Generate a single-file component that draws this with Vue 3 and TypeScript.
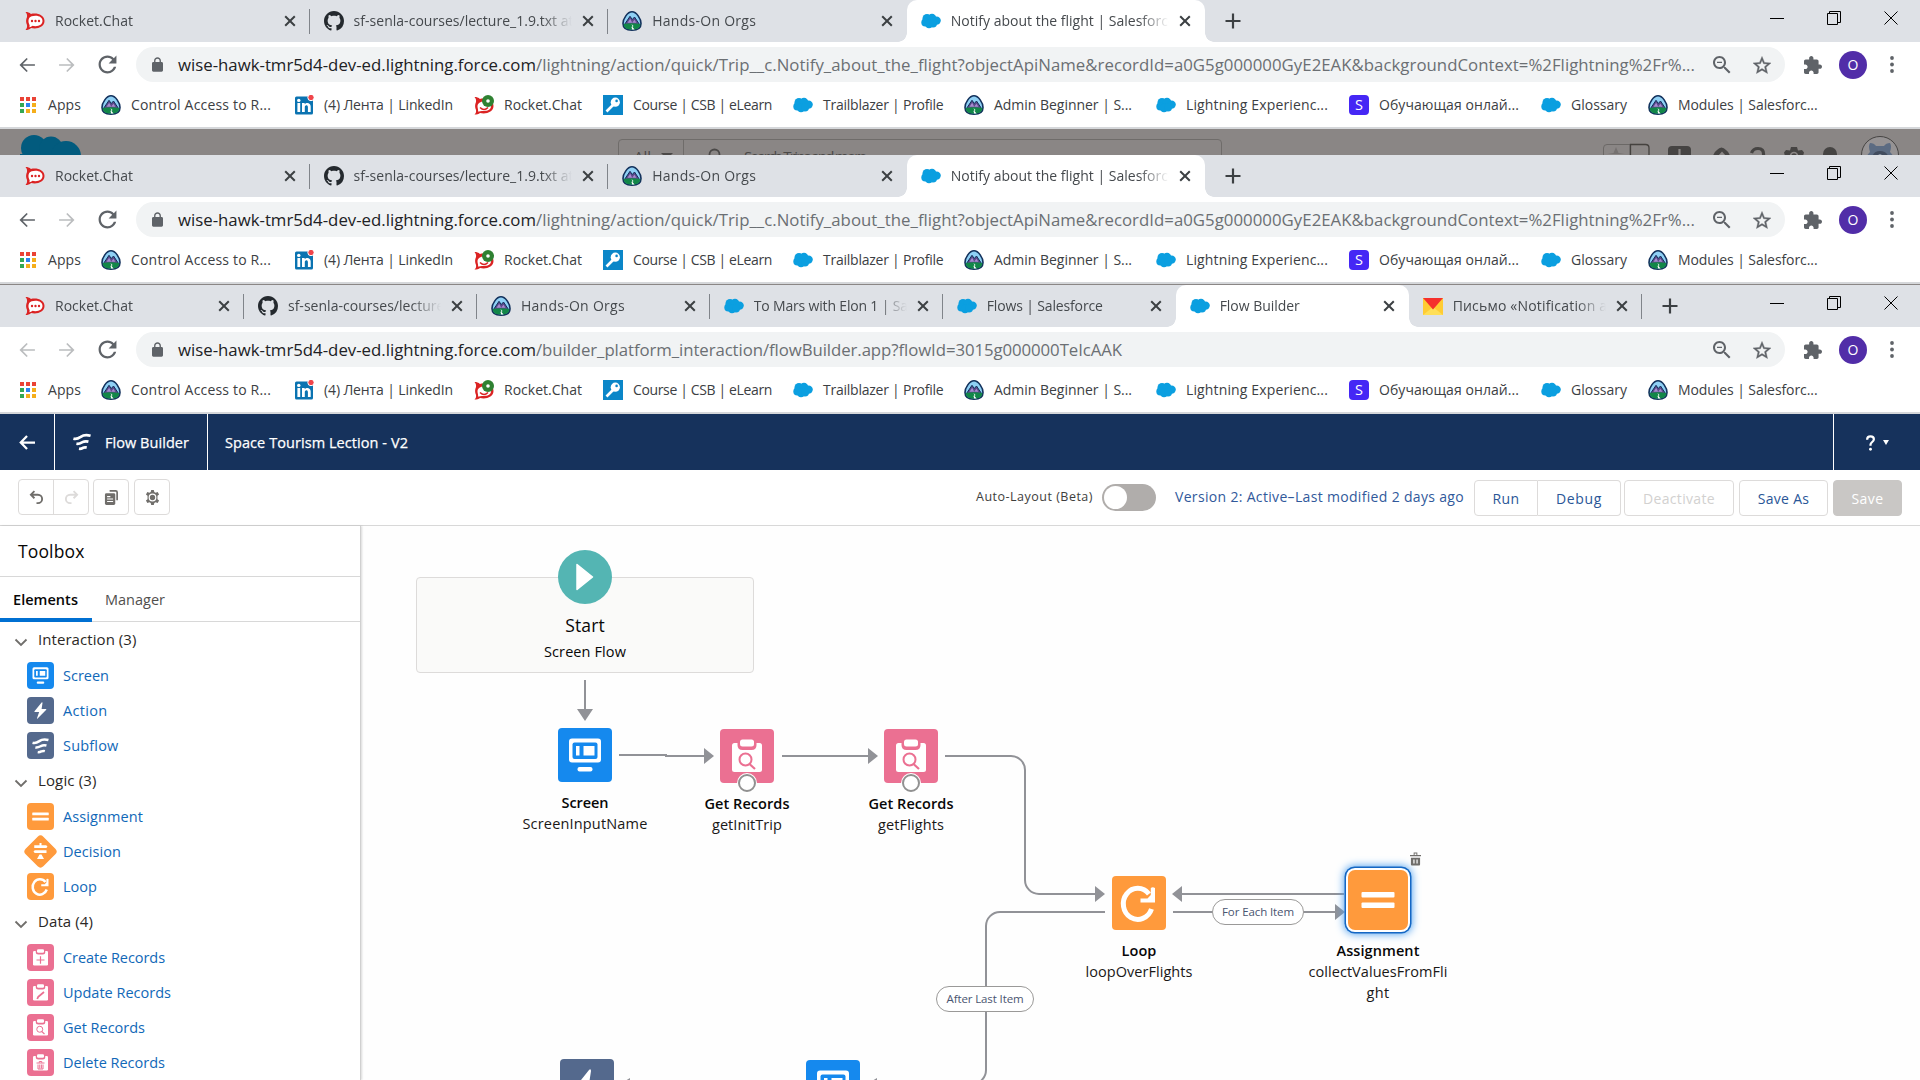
<script setup lang="ts">
interface Tab { icon: string; title: string; w: number; active?: boolean; sep?: boolean }
interface Chrome { tabs: Tab[]; pitch: number; canBack: boolean; path: string; pathW: number; band?: boolean; line?: boolean }
interface Node { x: number; y: number; icon: string; color: string; label: string; labelW: number; names: { t: string; w: number }[]; dot?: boolean; selected?: boolean }

// Spreads the letters of a one-line text so that it takes the given width.
const vFit = {
  mounted(el: HTMLElement, binding: { value: number }) {
    const n = (el.textContent || '').trim().length
    if (!n || !binding.value) return
    const w = el.getBoundingClientRect().width
    el.style.letterSpacing = `${(binding.value - w) / n}px`
  },
}

const clip = '<path fill="#fff" d="M14.500 14H39.500q2.500 0 2.500 2.500V40.500q0 2.500-2.500 2.500H14.500q-2.500 0-2.500-2.500V16.500q0-2.500 2.500-2.500z"/><path d="M17.500 12h19v4q0 5-5 5h-9q-5 0-5-5z" fill="#eb7092"/><rect x="20" y="10.500" width="14" height="7" rx="2.500" fill="#fff"/>'
const flowStrips = '<path d="M1.500 7.500C5 8.500 7 7.500 10 5.500 13.500 3 17 3 21.500 4.200M5 13.500c3 .6 4.500-.4 7-1.800 2.200-1.200 4.500-1.200 7-.6M8 19.300c2.200.4 3.200-.2 4.800-1 1.600-.7 2.800-.6 4.200-.2" fill="none" stroke="#fff" stroke-width="3.200"/>'
const reloadPath = 'M17.65 6.35C16.2 4.9 14.21 4 12 4c-4.42 0-7.99 3.58-7.99 8s3.57 8 7.99 8c3.730 0 6.840-2.550 7.730-6h-2.080c-.820 2.330-3.040 4-5.650 4-3.310 0-6-2.690-6-6s2.690-6 6-6c1.660 0 3.140.690 4.220 1.780L13 11h7V4l-2.350 2.350z'

const icons: Record<string, { vb: string; body: string }> = {
  rocket: { vb: '0 0 20 20', body: '<path d="M.5 1c2 0 4.200.6 5.400 2 6-1.600 13.600 1 13.600 7S12 18.600 6 17c-1.200 1.400-3.400 2-5.500 2 1.500-1.800 1.800-3.200 1.500-5C.8 11.600.8 8.400 2 6 2.300 4.200 2 2.800.5 1z" fill="#db2323"/><path d="M10.500 4.800c4.200 0 7 2.200 7 5.200s-2.800 5.200-7 5.200c-1.200 0-2.200-.1-3-.4-1 .8-1.800 1.200-3.200 1.400.5-1 .5-2-.1-3-1-1.800-1-4.600 0-6.300 1.200-1.400 3.300-2.100 6.300-2.100z" fill="#fff"/><g fill="#db2323"><circle cx="7" cy="10" r="1.200"/><circle cx="10.500" cy="10" r="1.200"/><circle cx="14" cy="10" r="1.200"/></g>' },
  rocketDot: { vb: '0 0 20 20', body: '<path d="M.5 2c2 0 4.200.6 5.400 2 6-1.600 13.600 1 13.600 7S12 19.600 6 18c-1.200 1.400-3.400 1.500-5.500 1.500 1.500-1.300 1.800-2.700 1.500-4.500C.8 12.600.8 9.400 2 7 2.300 5.200 2 3.800.5 2z" fill="#db2323"/><path d="M10 6.500c4.200 0 7 1.700 7 4.700s-2.800 4.700-7 4.700c-3 0-5 .3-6 .6.5-2-.5-3-.5-5 0-3.500 3-5 6.500-5z" fill="#fff"/><path d="M6 12.500q4 4 8 0" stroke="#db2323" stroke-width="1.500" fill="none"/><circle cx="14" cy="6" r="6" fill="#2f8132"/><circle cx="14" cy="6" r="1.800" fill="#fff"/>' },
  github: { vb: '0 0 16 16', body: '<path fill="#24292e" d="M8 0C3.580 0 0 3.580 0 8c0 3.540 2.290 6.530 5.470 7.590.4.070.550-.170.550-.380 0-.190-.010-.820-.010-1.490-2.010.370-2.530-.490-2.690-.940-.090-.230-.480-.940-.820-1.130-.280-.150-.680-.520-.010-.530.630-.010 1.080.580 1.230.820.720 1.210 1.870.870 2.330.660.070-.520.280-.870.510-1.070-1.780-.2-3.640-.890-3.640-3.950 0-.870.310-1.590.820-2.150-.080-.2-.360-1.020.080-2.120 0 0 .670-.210 2.200.820.640-.180 1.320-.270 2-.270.680 0 1.360.090 2 .270 1.530-1.040 2.200-.820 2.200-.820.440 1.100.160 1.920.080 2.120.510.560.820 1.270.820 2.150 0 3.070-1.870 3.750-3.650 3.950.290.250.540.730.540 1.480 0 1.070-.010 1.930-.010 2.200 0 .210.150.460.550.380A8.013 8.013 0 0016 8c0-4.420-3.580-8-8-8z"/>' },
  trail: { vb: '0 0 20 20', body: '<path d="M10 .8c4.500 0 9 7 9 11.700 0 4-2.500 6.700-9 6.700s-9-2.700-9-6.700C1 7.800 5.500.8 10 .8z" fill="#8fd0f5" stroke="#12315c" stroke-width="1.600"/><path d="M2.500 13.500L8 5.300l2.300 3.200L12.500 6l5 7.500z" fill="#5c4a8a" stroke="#12315c"/><path d="M5.500 11.800l2.700-4 2 4 2.200-3 2 3z" fill="#a78bd0"/><path d="M1.700 13q8-1.500 16.600 0c0 4-3 5.600-8.300 5.600S1.700 17 1.700 13z" fill="#128748"/><path d="M9.500 13l2 2-1 1 2 2.500h-2.300l-.7-2.500 1-.8z" fill="#fff"/>' },
  cloud: { vb: '0 0 20 20', body: '<g fill="#0b9fe0"><circle cx="6" cy="7.500" r="4.500"/><circle cx="11" cy="7" r="4.200"/><circle cx="15.600" cy="9.600" r="4.200"/><circle cx="4.300" cy="11.500" r="4"/><circle cx="8" cy="13" r="4.200"/><circle cx="12" cy="12.500" r="4"/></g>' },
  linkedin: { vb: '0 0 20 20', body: '<rect x="1" y="1.500" width="18" height="18" rx="1.500" fill="#0a73b1"/><g fill="#fff"><rect x="3.400" y="8" width="2.800" height="9"/><circle cx="4.800" cy="5.400" r="1.700"/><path d="M8 8h2.700v1.300c1.500-2.300 6-2 6 2.300V17h-2.800v-4.700c0-2.700-3.100-2.500-3.100 0V17H8z"/></g><circle cx="17" cy="2.500" r="3.200" fill="#f0454b" stroke="#fff"/>' },
  key: { vb: '0 0 20 20', body: '<path d="M0 0h20v20H0z" fill="#0b86c8"/><circle cx="12.300" cy="7.200" r="4.600" fill="#fff"/><circle cx="13.600" cy="5.900" r="1.300" fill="#0b86c8"/><path d="M10.500 9.500l-7 7" stroke="#fff" stroke-width="2.600"/>' },
  s: { vb: '0 0 20 20', body: '<rect width="20" height="20" rx="4" fill="#4527f5"/><text x="10" y="15.300" font-size="14.500" font-family="Open Sans, sans-serif" fill="#fff" text-anchor="middle">S</text>' },
  apps: { vb: '0 0 20 20', body: '<g><path d="M2 2h4v4H2zM8 2h4v4H8zM14 2h4v4h-4z" fill="#ea4335"/><path d="M2 8h4v4H2zM2 14h4v4H2z" fill="#34a853"/><path d="M8 8h4v4H8z" fill="#2b83f0"/><path d="M14 8h4v4h-4zM14 14h4v4h-4zM8 14h4v4H8z" fill="#f5ae1b"/></g>' },
  mail: { vb: '0 0 20 20', body: '<path d="M0 2h20v17H0z" fill="#ffcc33"/><path d="M0 19l10-8 10 8z" fill="#ffdf57"/><path d="M0 2h20L10 13.500z" fill="#f5302d"/>' },
  back: { vb: '0 0 24 24', body: '<path fill="currentColor" d="M21.500 11H6.830l6.090-6.090L11.500 3.500l-8.500 8.500 8.500 8.500 1.410-1.410L6.830 13H21.500v-2z"/>' },
  fwd: { vb: '0 0 24 24', body: '<path fill="currentColor" d="M2.500 11h14.670l-6.090-6.090L12.500 3.500l8.500 8.500-8.500 8.500-1.410-1.410L17.170 13H2.500v-2z"/>' },
  reload: { vb: '3.500 3.500 17 17', body: `<path fill="#5f6368" d="${reloadPath}"/>` },
  lock: { vb: '4 1 16 21', body: '<path fill="#5f6368" d="M18 8h-1V6c0-2.760-2.240-5-5-5S7 3.240 7 6v2H6c-1.100 0-2 .9-2 2v10c0 1.100.9 2 2 2h12c1.100 0 2-.9 2-2V10c0-1.100-.9-2-2-2zM9 6c0-1.660 1.340-3 3-3s3 1.340 3 3v2H9V6z"/>' },
  zoom: { vb: '3 3 18 18', body: '<path fill="#5f6368" d="M15.500 14h-.790l-.280-.270C15.410 12.590 16 11.110 16 9.500 16 5.910 13.090 3 9.500 3S3 5.910 3 9.500 5.910 16 9.500 16c1.610 0 3.090-.590 4.230-1.570l.270.280v.790l5 4.990L20.490 19l-4.990-5zm-6 0C7.010 14 5 11.990 5 9.500S7.010 5 9.500 5 14 7.010 14 9.500 11.990 14 9.500 14zM7 8.800h5v1.300H7z"/>' },
  star: { vb: '2 1.500 20 20', body: '<path fill="#5f6368" stroke="#5f6368" stroke-width=".4" d="M22 9.240l-7.190-.620L12 2 9.190 8.630 2 9.240l5.460 4.730L5.820 21 12 17.270 18.180 21l-1.630-7.030L22 9.240zM12 15.400l-3.760 2.270 1-4.280-3.320-2.880 4.380-.380L12 6.100l1.710 4.040 4.380.380-3.320 2.880 1 4.280L12 15.400z"/>' },
  puzzle: { vb: '2 1 21 21', body: '<path fill="#5f6368" d="M20.500 11H19V7c0-1.100-.9-2-2-2h-4V3.500C13 2.120 11.880 1 10.500 1S8 2.120 8 3.500V5H4c-1.100 0-1.990.9-1.990 2v3.800H3.500c1.490 0 2.700 1.210 2.700 2.700s-1.210 2.700-2.700 2.700H2V20c0 1.100.9 2 2 2h3.800v-1.500c0-1.490 1.210-2.700 2.700-2.700 1.490 0 2.700 1.210 2.700 2.700V22H17c1.100 0 2-.9 2-2v-4h1.500c1.380 0 2.500-1.120 2.500-2.500S21.880 11 20.500 11z"/>' },
  more: { vb: '0 0 4 18', body: '<g fill="#5f6368"><circle cx="2" cy="2.500" r="1.900"/><circle cx="2" cy="9" r="1.900"/><circle cx="2" cy="15.500" r="1.900"/></g>' },
  flow: { vb: '1 1 21 21', body: flowStrips },
  screen: { vb: '0 0 54 54', body: '<rect x="11" y="10.500" width="32" height="24" rx="3" fill="#fff"/><rect x="14.500" y="14.500" width="25" height="16.500" rx="2" fill="#1589ee"/><path d="M18 18h3.500v9.500H18zM25.500 18h11v9.500h-11z" fill="#fff"/><rect x="19.500" y="39" width="15" height="4.500" rx="2" fill="#fff"/>' },
  action: { vb: '0 0 54 54', body: '<path fill="#fff" d="M29.200 10.800L15 28.500q-1 1.500.8 1.500h8.500l-4.300 12.500q-.2 1.800 1.200.5L38.500 25.500q1-1.700-.8-1.700h-8.500L31 12Q31 9.500 29.200 10.800z"/>' },
  subflow: { vb: '-5.500 -6 34 34', body: flowStrips },
  assign: { vb: '0 0 54 54', body: '<rect x="10.500" y="19" width="33" height="5.500" rx="1" fill="#fff"/><rect x="10.500" y="29.500" width="33" height="5.500" rx="1" fill="#fff"/>' },
  decision: { vb: '0 0 54 54', body: '<path fill="#fff" d="M25 10h4v4.500h9.500L41 17.300 38.500 20H14.500v-5.500H25zM39 24.500V30H15.500L13 27.200l2.500-2.700zM25 33h4l5 9H20z"/>' },
  loop: { vb: '0 0 54 54', body: '<path d="M37 18A14.500 15.500 0 1 0 39.500 33" fill="none" stroke="#fff" stroke-width="5"/><path d="M43 12v14.500H28.500v-4h7L38.800 19v-7q2-1.500 4.200 0z" fill="#fff"/>' },
  get: { vb: '0 0 54 54', body: clip + '<circle cx="25.500" cy="30.500" r="6" fill="none" stroke="#eb7092" stroke-width="2"/><path d="M29.500 35l5.500 5" stroke="#eb7092" stroke-width="2.200"/>' },
  create: { vb: '0 0 54 54', body: clip + '<path d="M27 24.500v15M19 32h16" stroke="#eb7092" stroke-width="2.400"/>' },
  update: { vb: '0 0 54 54', body: clip + '<path d="M20.500 40l2-4.500L34 26" fill="none" stroke="#eb7092" stroke-width="3.600"/>' },
  del: { vb: '0 0 54 54', body: clip + '<path d="M19 28h16M24.500 27.500v-2.500h5v2.500M22 31v9h10V31M25.500 31v8M28.800 31v8" fill="none" stroke="#eb7092" stroke-width="2"/>' },
  undo: { vb: '0 0 16 16', body: '<path d="M5.800 1.200L2 5l3.800 3.800M2.200 5h7.300a4.400 4.400 0 0 1 0 9H8" fill="none" stroke="currentColor" stroke-width="2"/>' },
  copy: { vb: '0 0 16 16', body: '<path d="M6 1h6.500Q14 1 14 2.500V11" fill="none" stroke="#706e6b" stroke-width="1.800"/><rect x="1" y="3.500" width="11" height="12.500" rx="1.500" fill="#706e6b"/><path d="M3.300 7h3.500M3.300 9.600h6.400M3.300 12.300h6.400" stroke="#fff" stroke-width="1.200"/>' },
  gear: { vb: '0 0 16 16', body: '<path d="M6.600 0h2.800l.5 2.200 1.400.8 2.200-.8 1.500 2.500-1.700 1.500v3.600l1.700 1.500-1.500 2.500-2.200-.8-1.400.8-.5 2.200H6.600l-.5-2.200-1.400-.8-2.200.8L1 11.300l1.700-1.500V6.200L1 4.700l1.500-2.500 2.200.8 1.400-.8z" fill="#706e6b"/><circle cx="8" cy="8" r="3.500" fill="none" stroke="#fff" stroke-width="1.300"/>' },
  trash: { vb: '0 0 12 14', body: '<path d="M0 2.500h12v1.500H0zM4 0h4v2.500H7V1H5v1.500H4zM1 5.500h10V13q0 1-1 1H2q-1 0-1-1z" fill="#706e6b"/><path d="M4.300 7.500v4.500M7.700 7.500v4.500" stroke="#fff" stroke-width="1.300"/>' },
  question: { vb: '0 0 10 18', body: '<path d="M1.200 5.300Q1.200 1.500 5 1.500t3.800 3.300c0 3-3.800 3.200-3.800 6.200v1" fill="none" stroke="#fff" stroke-width="2.500"/><circle cx="5" cy="16" r="1.600" fill="#fff"/>' },
}

const shortTabs: Tab[] = [
  { icon: 'rocket', title: 'Rocket.Chat', w: 78, sep: true },
  { icon: 'github', title: 'sf-senla-courses/lecture_1.9.txt at', w: 220, sep: true },
  { icon: 'trail', title: 'Hands-On Orgs', w: 104 },
  { icon: 'cloud', title: 'Notify about the flight | Salesforce', w: 225, active: true },
]
const longPath = '/lightning/action/quick/Trip__c.Notify_about_the_flight?objectApiName&recordId=a0G5g000000GyE2EAK&backgroundContext=%2Flightning%2Fr%...'
const chromes: Chrome[] = [
  { tabs: shortTabs, pitch: 298.6, canBack: true, path: longPath, pathW: 1159, band: true },
  { tabs: shortTabs, pitch: 298.6, canBack: true, path: longPath, pathW: 1159, line: true },
  {
    tabs: [
      { icon: 'rocket', title: 'Rocket.Chat', w: 78, sep: true },
      { icon: 'github', title: 'sf-senla-courses/lecture_1.9.txt at', w: 220, sep: true },
      { icon: 'trail', title: 'Hands-On Orgs', w: 104, sep: true },
      { icon: 'cloud', title: 'To Mars with Elon 1 | Salesforce', w: 204, sep: true },
      { icon: 'cloud', title: 'Flows | Salesforce', w: 116 },
      { icon: 'cloud', title: 'Flow Builder', w: 80, active: true },
      { icon: 'mail', title: 'Письмо «Notification about', w: 186, sep: true },
    ],
    pitch: 232.95, canBack: false, path: '/builder_platform_interaction/flowBuilder.app?flowId=3015g000000TeIcAAK', pathW: 586,
  },
]
const bookmarks = [
  { icon: 'apps', t: 'Apps', w: 33, box: 83 },
  { icon: 'trail', t: 'Control Access to R...', w: 140, box: 193 },
  { icon: 'linkedin', t: '(4) Лента | LinkedIn', w: 129, box: 180 },
  { icon: 'rocketDot', t: 'Rocket.Chat', w: 78, box: 129 },
  { icon: 'key', t: 'Course | CSB | eLearn', w: 139, box: 190 },
  { icon: 'cloud', t: 'Trailblazer | Profile', w: 120.5, box: 171 },
  { icon: 'trail', t: 'Admin Beginner | S...', w: 138, box: 192 },
  { icon: 'cloud', t: 'Lightning Experienc...', w: 142, box: 193 },
  { icon: 's', t: 'Обучающая онлай...', w: 140, box: 192 },
  { icon: 'cloud', t: 'Glossary', w: 56, box: 107 },
  { icon: 'trail', t: 'Modules | Salesforc...', w: 139.5, box: 170 },
]
const sections = [
  { t: 'Interaction (3)', w: 98.5, items: [
    { icon: 'screen', c: 'blue', t: 'Screen', w: 46 },
    { icon: 'action', c: 'slate', t: 'Action', w: 44.5 },
    { icon: 'subflow', c: 'slate', t: 'Subflow', w: 55.5 }] },
  { t: 'Logic (3)', w: 58.5, items: [
    { icon: 'assign', c: 'orange', t: 'Assignment', w: 80 },
    { icon: 'decision', c: 'diamond', t: 'Decision', w: 58 },
    { icon: 'loop', c: 'orange', t: 'Loop', w: 34 }] },
  { t: 'Data (4)', w: 55, items: [
    { icon: 'create', c: 'pink', t: 'Create Records', w: 102 },
    { icon: 'update', c: 'pink', t: 'Update Records', w: 108 },
    { icon: 'get', c: 'pink', t: 'Get Records', w: 82 },
    { icon: 'del', c: 'pink', t: 'Delete Records', w: 102 }] },
]

// Canvas coordinates are window coordinates; the canvas starts at this origin.
const ox = 361
const oy = 526
const nodes: Node[] = [
  { x: 585, y: 728, icon: 'screen', color: 'blue', label: 'Screen', labelW: 47, names: [{ t: 'ScreenInputName', w: 125 }] },
  { x: 747, y: 729, icon: 'get', color: 'pink', label: 'Get Records', labelW: 85, names: [{ t: 'getInitTrip', w: 70 }], dot: true },
  { x: 911, y: 729, icon: 'get', color: 'pink', label: 'Get Records', labelW: 85, names: [{ t: 'getFlights', w: 66 }], dot: true },
  { x: 1139, y: 876, icon: 'loop', color: 'orange', label: 'Loop', labelW: 35, names: [{ t: 'loopOverFlights', w: 107 }] },
  { x: 1378, y: 876, icon: 'assign', color: 'orange', label: 'Assignment', labelW: 83, names: [{ t: 'collectValuesFromFli', w: 139 }, { t: 'ght', w: 23 }], selected: true },
  { x: 587, y: 1059, icon: 'action', color: 'slate', label: '', labelW: 0, names: [] },
  { x: 833, y: 1060, icon: 'screen', color: 'blue', label: '', labelW: 0, names: [] },
]
const pills = [
  { x: 1212, y: 899, width: 92, t: 'For Each Item', w: 72 },
  { x: 936, y: 986, width: 98, t: 'After Last Item', w: 77 },
]
const px = (n: number) => `${n}px`
</script>

<template>
  <div class="page">
    <section v-for="(c, ci) in chromes" :key="ci" class="chrome">
      <div class="tabs">
        <div v-for="(t, ti) in c.tabs" :key="ti" class="tab" :class="{ active: t.active, sep: t.sep }" :style="{ width: px(c.pitch) }">
          <svg class="fav" :viewBox="icons[t.icon].vb" v-html="icons[t.icon].body" />
          <span class="title"><span v-fit="t.w" class="one">{{ t.title }}</span></span>
          <svg class="x" viewBox="0 0 12 12"><path d="M1.200 1.200l9.600 9.600M10.800 1.200L1.200 10.800" stroke="#3c4043" stroke-width="2" /></svg>
        </div>
        <svg class="plus" viewBox="0 0 16 16"><path d="M8 .5v15M.5 8h15" stroke="#3c4043" stroke-width="2.200" /></svg>
        <div class="wincontrols">
          <svg width="14" height="14"><path d="M0 7.500h14" stroke="#000" /></svg>
          <svg width="14" height="14" fill="none" stroke="#000"><path d="M.5 2.500h10v11H.5zM2.500 2.500v-2h11v11h-3" /></svg>
          <svg width="14" height="14"><path d="M.5 .5l13 13M13.500 .5l-13 13" stroke="#000" /></svg>
        </div>
      </div>
      <div class="nav">
        <svg class="navicon" :class="{ dim: !c.canBack }" :viewBox="icons.back.vb" v-html="icons.back.body" />
        <svg class="navicon dim" :viewBox="icons.fwd.vb" v-html="icons.fwd.body" />
        <svg class="reload" :viewBox="icons.reload.vb" v-html="icons.reload.body" />
        <div class="urlbar">
          <svg class="lock" :viewBox="icons.lock.vb" v-html="icons.lock.body" />
          <span v-fit="358" class="host">wise-hawk-tmr5d4-dev-ed.lightning.force.com</span>
          <span v-fit="c.pathW" class="path">{{ c.path }}</span>
          <svg class="zoom" :viewBox="icons.zoom.vb" v-html="icons.zoom.body" />
          <svg class="bstar" :viewBox="icons.star.vb" v-html="icons.star.body" />
        </div>
        <svg class="puzzle" :viewBox="icons.puzzle.vb" v-html="icons.puzzle.body" />
        <span class="avatar">O</span>
        <svg class="more" :viewBox="icons.more.vb" v-html="icons.more.body" />
      </div>
      <div class="bookmarks">
        <div v-for="b in bookmarks" :key="b.t" class="bm" :style="{ width: px(b.box) }">
          <svg class="fav" :viewBox="icons[b.icon].vb" v-html="icons[b.icon].body" />
          <span v-fit="b.w" class="one">{{ b.t }}</span>
        </div>
      </div>
      <div v-if="c.band" class="band">
        <svg class="bandcloud" viewBox="0 0 62 22" fill="#025b7e"><circle cx="14" cy="14" r="13" /><circle cx="31" cy="14" r="11.500" /><circle cx="46" cy="22" r="15" /><path d="M0 20h60v2H0z" /></svg>
        <div class="bandsearch">
          <div class="bandall"><span>All</span><i class="bandcaret" /></div>
          <svg width="13" height="18"><circle cx="6.500" cy="7.500" r="5" fill="none" stroke="#4b4948" stroke-width="1.800" /></svg>
          <span v-fit="128" class="bandtext">Search Trips and more...</span>
        </div>
        <svg class="bandicons" width="304" height="26" viewBox="1602 129 304 26">
          <path d="M1630 144.500h-23q-3.500 0-3.500 3.500v10h26.500z" fill="none" stroke="#6b6866" />
          <path d="M1616 147l2.500 6 6 1h-17l6-1z" fill="#757170" />
          <path d="M1630.500 158v-13.500h15q3.500 0 3.500 3.500v10" fill="none" stroke="#45423f" stroke-width="1.300" />
          <rect x="1668" y="146" width="23" height="18" rx="4" fill="#464443" /><path d="M1679.500 149v8" stroke="#8a8685" stroke-width="2.200" />
          <path d="M1713 156q1-4 4-6 4.500-5 9 0 3 2 4 6z" fill="#464443" /><path d="M1718 156l4-4.500 4 4.500z" fill="#8a8685" />
          <path d="M1751.500 153q1.500-4.500 6.500-4.500 6 0 5.500 6.500" fill="none" stroke="#464443" stroke-width="3.200" />
          <path d="M1785 156l-1-3.500 2-2.500 4 .5 1-3.500h6l1 3.500 4-.5 2 2.500-1 3.500z" fill="#464443" /><circle cx="1794" cy="156" r="3.500" fill="none" stroke="#8a8685" stroke-width="1.600" />
          <circle cx="1830" cy="154" r="7" fill="#464443" />
          <circle cx="1880" cy="155" r="18.500" fill="#969394" stroke="#464443" />
          <path d="M1866 158q1-3 4-6-2-6 0-9 4 0 6 3h8q2-3 6-3 2 3 0 9 3 3 4 6z" fill="#5b6b82" /><path d="M1872 158q1-7 8-7t9 7z" fill="#414c5e" /><path d="M1876 156l4-2 4 2v3h-8z" fill="#98a2b0" />
        </svg>
      </div>
      <div v-if="c.line" class="hairline" />
    </section>

    <header class="apphead">
      <div class="hback"><svg viewBox="0 0 18 16"><path d="M8.500 1L1.800 8l6.700 7M2 8h15" fill="none" stroke="#fff" stroke-width="2.400" /></svg></div>
      <div class="hbuilder"><svg class="hflow" :viewBox="icons.flow.vb" v-html="icons.flow.body" /><span v-fit="84">Flow Builder</span></div>
      <div class="hname"><span v-fit="183">Space Tourism Lection - V2</span></div>
      <div class="hhelp"><svg class="q" :viewBox="icons.question.vb" v-html="icons.question.body" /><i class="caret" /></div>
    </header>

    <div class="toolbar">
      <div class="group"><span class="ib"><svg :viewBox="icons.undo.vb" v-html="icons.undo.body" /></span><span class="ib off"><svg class="flip" :viewBox="icons.undo.vb" v-html="icons.undo.body" /></span></div>
      <div class="group g2"><span class="ib"><svg :viewBox="icons.copy.vb" v-html="icons.copy.body" /></span></div>
      <div class="group g3"><span class="ib"><svg :viewBox="icons.gear.vb" v-html="icons.gear.body" /></span></div>
      <div class="right">
        <span v-fit="117" class="auto">Auto-Layout (Beta)</span>
        <span class="toggle" />
        <span v-fit="289" class="version">Version 2: Active–Last modified 2 days ago</span>
        <div class="bgroup"><button class="run"><span v-fit="27">Run</span></button><button class="debug"><span v-fit="46">Debug</span></button></div>
        <button class="deact"><span v-fit="72">Deactivate</span></button>
        <button class="saveas"><span v-fit="51.500">Save As</span></button>
        <button class="save"><span v-fit="32">Save</span></button>
      </div>
    </div>

    <div class="main">
      <aside class="side">
        <div class="sidehead"><span v-fit="66.500">Toolbox</span></div>
        <div class="sidetabs"><span class="st on"><b v-fit="65">Elements</b></span><span class="st"><span v-fit="60">Manager</span></span></div>
        <div v-for="s in sections" :key="s.t">
          <div class="shead">
            <svg width="14" height="9" viewBox="0 0 14 9"><path d="M1.500 1.500L7 7l5.500-5.500" fill="none" stroke="#706e6b" stroke-width="1.800" /></svg>
            <span v-fit="s.w">{{ s.t }}</span>
          </div>
          <div v-for="i in s.items" :key="i.t" class="sitem">
            <span class="tile" :class="i.c"><svg :viewBox="icons[i.icon].vb" v-html="icons[i.icon].body" /></span>
            <a v-fit="i.w">{{ i.t }}</a>
          </div>
        </div>
      </aside>

      <div class="canvas">
        <svg class="wires" width="1559" height="554" viewBox="361 526 1559 554">
          <g fill="none" stroke="#919297" stroke-width="2">
            <path d="M585 680v31M619 755h47v1h40M782 756h88M945 756h66a14 14 0 0 1 14 14v110a14 14 0 0 0 14 14h58M1105 912h-105a14 14 0 0 0-14 14v144a14 14 0 0 1-14 14M1344 894h-164M1173 912h164" />
          </g>
          <path fill="#919297" d="M577 709h16l-8 12zM704 748v16l10-8zM868 748v16l10-8zM1095 886v16l10-8zM1182 886v16l-10-8zM1335 904v16l10-8zM630 1078v6l-5-3zM877 1078v6l-5-3z" />
        </svg>
        <div class="start">
          <span class="play"><svg width="18" height="28" viewBox="0 0 18 28"><path d="M1 1.500v25L16.500 14z" fill="#fff" stroke="#fff" stroke-width="1.500" stroke-linejoin="round" /></svg></span>
          <span v-fit="39.500" class="startlabel">Start</span>
          <span v-fit="82" class="startkind">Screen Flow</span>
        </div>
        <div v-for="(n, ni) in nodes" :key="ni" class="node" :style="{ left: px(n.x - ox - 80), top: px(n.y - oy) }">
          <span class="big" :class="[n.color, { selected: n.selected }]">
            <svg :viewBox="icons[n.icon].vb" v-html="icons[n.icon].body" />
            <i v-if="n.dot" class="dot" />
            <svg v-if="n.selected" class="bin" :viewBox="icons.trash.vb" v-html="icons.trash.body" />
          </span>
          <b v-if="n.label" v-fit="n.labelW">{{ n.label }}</b>
          <span v-for="m in n.names" :key="m.t" v-fit="m.w" class="nm">{{ m.t }}</span>
        </div>
        <span v-for="p in pills" :key="p.t" class="pill" :style="{ left: px(p.x - ox), top: px(p.y - oy), width: px(p.width) }"><span v-fit="p.w">{{ p.t }}</span></span>
      </div>
    </div>
  </div>
</template>

<style>
html, body { margin: 0; overflow: hidden; background: #fff; }
</style>

<style scoped>
.page { width: 1920px; height: 1080px; overflow: hidden; display: flex; flex-direction: column; font-family: "Open Sans", "Noto Sans", sans-serif; font-size: 14px; color: #080707; background: #fff; }
.page * { box-sizing: border-box; }
.page span, .page a, .page b { white-space: nowrap; }
svg { display: block; flex: none; }
.chrome { flex: none; }
.tabs { height: 42px; background: #dee1e6; display: flex; align-items: center; padding-left: 11px; }
.tab { height: 42px; flex: none; display: flex; align-items: center; position: relative; padding: 0 13px 0 14px; }
.tab.sep::after { content: ""; position: absolute; right: 0; top: 9px; width: 1px; height: 25px; background: #80848a; }
.tab.active { background: #fff; border-radius: 10px 10px 0 0; }
.tab.active::before, .tab.active::after { content: ""; position: absolute; bottom: 0; width: 9px; height: 9px; }
.tab.active::before { left: -9px; background: radial-gradient(circle at 0 0, transparent 8.500px, #fff 9px); }
.tab.active::after { right: -9px; background: radial-gradient(circle at 100% 0, transparent 8.500px, #fff 9px); }
.fav { width: 20px; height: 20px; margin-right: 10px; }
.title { flex: 1; min-width: 0; overflow: hidden; color: #45494d; line-height: 24px; margin-right: 10px; -webkit-mask-image: linear-gradient(90deg, #000 calc(100% - 30px), transparent); mask-image: linear-gradient(90deg, #000 calc(100% - 30px), transparent); }
.one { display: inline-block; flex: none; }
.x { width: 12px; height: 12px; margin-right: 1px; }
.plus { width: 16px; height: 16px; margin-left: 20px; }
.wincontrols { margin-left: auto; display: flex; gap: 43px; padding: 0 22px 6px 0; }
.nav { height: 45px; display: flex; align-items: center; }
.navicon { width: 20px; height: 20px; margin-left: 17px; margin-right: 3px; color: #5f6368; }
.navicon.dim { color: #bbbdbf; }
.reload { width: 19px; height: 19px; margin-left: 18px; margin-right: 19px; }
.urlbar { flex: none; width: 1649px; height: 35px; border-radius: 18px; background: #f1f3f4; display: flex; align-items: center; font-size: 16.800px; padding-left: 16px; }
.lock { width: 11px; height: 15px; margin-right: 15px; }
.host { color: #202124; flex: none; }
.path { color: #6b6f73; flex: none; margin-right: auto; }
.zoom { width: 18px; height: 18px; margin-right: 22px; }
.bstar { width: 18px; height: 18px; margin-right: 14px; }
.puzzle { width: 18px; height: 18px; margin-left: 19px; }
.avatar { width: 28px; height: 28px; border-radius: 50%; background: #512da8; color: #fff; font-size: 14px; display: flex; align-items: center; justify-content: center; margin-left: 17px; }
.more { width: 4px; height: 19px; margin-left: 23px; }
.bookmarks { height: 42px; border-bottom: 2px solid #d5d7da; padding: 0 0 5px 18px; display: flex; align-items: center; color: #3c4043; }
.bm { display: flex; align-items: center; flex: none; height: 24px; }
.band { height: 26px; overflow: hidden; background: #8a8685; display: flex; align-items: flex-start; padding-left: 20px; }
.bandcloud { width: 62px; height: 22px; margin-top: 5px; }
.bandsearch { width: 604px; height: 33px; flex: none; margin: 10px 0 0 536px; border: 1px solid #6f6c6a; border-radius: 4px; display: flex; align-items: center; color: #4b4948; font-size: 15px; }
.bandall { width: 65px; height: 32px; border-right: 1px solid #6f6c6a; display: flex; align-items: center; justify-content: space-between; padding: 0 10px 0 15px; margin-right: 24px; }
.bandcaret { border: 6px solid transparent; border-top-color: #4b4948; border-bottom: 0; }
.bandtext { margin-left: 23px; }
.bandicons { margin-left: 380px; }
.hairline { height: 1px; background: #8a8685; }
.apphead { height: 56px; flex: none; background: #16325c; color: #fff; display: flex; font-size: 14.500px; }
.apphead > div { display: flex; align-items: center; }
.apphead span { -webkit-text-stroke: 0.25px #fff; }
.hback { width: 55px; border-right: 1px solid #fff; padding-left: 19px; }
.hback svg { width: 17px; height: 15px; }
.hbuilder { width: 153px; border-right: 1px solid #fff; padding-left: 18px; }
.hflow { width: 18px; height: 20px; margin-right: 14px; }
.hname { flex: 1; padding-left: 17px; }
.hhelp { width: 87px; border-left: 1px solid #fff; padding-left: 32px; gap: 8px; }
.q { width: 9px; height: 16px; margin-top: 2px; }
.caret { border: 3.500px solid transparent; border-top: 5px solid #fff; border-bottom: 0; }
.toolbar { height: 56px; flex: none; border-bottom: 1px solid #d8d8d8; display: flex; padding: 9px 18px 0; }
.group { height: 36px; border: 1px solid #dddbda; border-radius: 4px; display: flex; }
.g2 { margin-left: 4px; }
.g3 { margin-left: 5px; }
.ib { width: 34px; display: flex; align-items: center; justify-content: center; color: #706e6b; }
.ib + .ib { border-left: 1px solid #dddbda; width: 35px; }
.ib svg { width: 15px; height: 15px; }
.ib.off { color: #dddbda; }
.flip { transform: scaleX(-1); }
.right { margin-left: auto; display: flex; align-items: center; height: 36px; margin-top: 1px; }
.auto { font-size: 12.500px; color: #3e3e3c; margin: 0 9px 3px 0; }
.toggle { width: 54px; height: 27px; border-radius: 14px; background: #b0adab; padding: 2px; margin: 0 19px 1px 0; }
.toggle::before { content: ""; display: block; width: 23px; height: 23px; border-radius: 50%; background: #fff; }
.version { color: #31599b; font-size: 14px; margin: 0 10px 3px 0; }
button { height: 36px; padding: 0; border: 1px solid #dddbda; border-radius: 4px; background: #fff; color: #2a5697; font: 14px "Open Sans", sans-serif; text-align: center; }
button span { display: inline-block; }
.bgroup { display: flex; }
.run { width: 64px; border-radius: 4px 0 0 4px; }
.debug { width: 83px; border-left: 0; border-radius: 0 4px 4px 0; }
.deact { width: 110px; margin-left: 3px; color: #d2d1d0; }
.saveas { width: 89px; margin-left: 5px; }
.save { width: 69px; margin-left: 5px; background: #c9c7c5; border-color: #c9c7c5; color: #fff; }
.main { flex: 1; display: flex; min-height: 0; }
.side { width: 361px; flex: none; border-right: 1px solid #d0d0d0; box-shadow: 1px 0 2px rgba(0,0,0,.15); background: #fff; z-index: 1; overflow: hidden; }
.sidehead { height: 51px; border-bottom: 1px solid #d8d8d8; display: flex; align-items: center; padding: 0 0 1px 18px; font-size: 17.500px; }
.sidetabs { height: 45px; border-bottom: 1px solid #d8d8d8; display: flex; }
.st { height: 45px; padding: 0 13px 0; display: flex; align-items: center; font-size: 14.500px; color: #514f4d; }
.st.on { width: 92px; padding-left: 13px; border-bottom: 4px solid #0070d2; color: #080707; padding-top: 4px; }
.st b, .node b { font-weight: 600; }
.shead { height: 36px; display: flex; align-items: center; padding: 0 0 2px 14px; gap: 10px; font-size: 15px; color: #2b2826; }
.shead svg { margin-top: 6px; }
.sitem { height: 35px; display: flex; align-items: center; padding-left: 27px; gap: 9px; font-size: 14.500px; color: #1168b8; }
.tile { width: 27px; height: 27px; border-radius: 4px; position: relative; }
.tile svg { width: 27px; height: 27px; position: relative; }
.blue { background: #1589ee; }
.slate { background: #54698d; }
.orange { background: #ff9a3c; }
.pink { background: #eb7092; }
.diamond::before { content: ""; position: absolute; inset: 1px; background: #ff9a3c; border-radius: 4px; transform: rotate(45deg); }
.canvas { position: relative; flex: 1; overflow: hidden; background: #fefefe; }
.wires { position: absolute; left: 0; top: 0; }
.start { position: absolute; left: 55px; top: 51px; width: 338px; height: 96px; background: #fafaf9; border: 1px solid #dddbda; border-radius: 4px; display: flex; flex-direction: column; align-items: center; }
.play { width: 54px; height: 54px; flex: none; border-radius: 50%; background: #54b5b3; margin-top: -28px; display: flex; align-items: center; justify-content: center; }
.startlabel { font-size: 17.500px; line-height: 26px; margin-top: 8px; }
.startkind { font-size: 14.500px; line-height: 24px; margin-top: 2px; }
.node { position: absolute; width: 160px; display: flex; flex-direction: column; align-items: center; font-size: 14.500px; line-height: 21px; }
.big { position: relative; width: 54px; height: 54px; border-radius: 4px; margin-bottom: 10px; }
.big > svg { width: 54px; height: 54px; }
.selected { top: -3px; box-shadow: 0 0 0 3px #ff9a3c, 0 0 0 5px #fff, 0 0 0 6.500px #1467c4, 0 0 8px 7px #4da0f0; }
.selected > svg.bin { position: absolute; width: 11px; height: 14px; left: 59px; top: -21px; }
.nm { color: #1a1817; }
.dot { position: absolute; left: 17px; top: 44px; width: 20px; height: 20px; border-radius: 50%; background: #fff; }
.dot::before { content: ""; position: absolute; inset: 1px; border: 2px solid #919191; border-radius: 50%; }
.pill { position: absolute; height: 26px; border: 1px solid #9a9998; border-radius: 13px; background: #fff; display: flex; align-items: center; justify-content: center; padding-bottom: 2px; font-size: 11.500px; color: #4a5570; }
</style>
